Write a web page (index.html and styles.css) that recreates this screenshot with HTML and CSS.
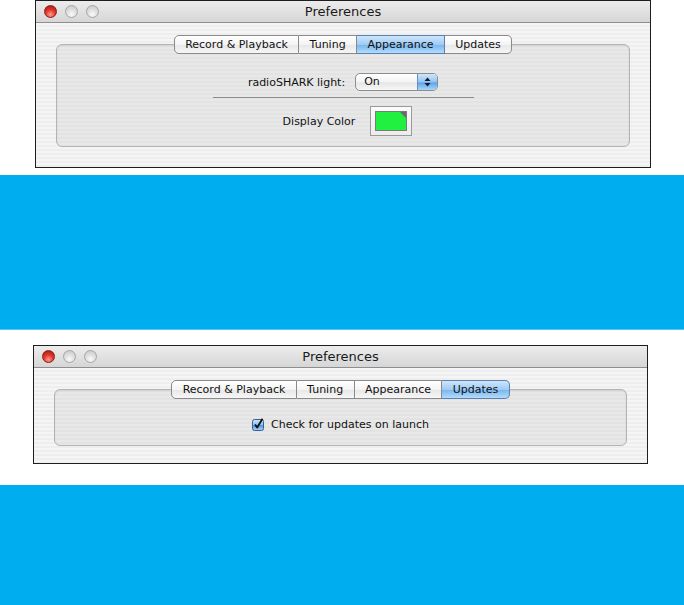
FILE: index.html
```html
<!DOCTYPE html>
<html lang="en">
<head>
    <meta charset="UTF-8">
    <meta name="viewport" content="width=device-width, initial-scale=1.0">
    <title>Preferences</title>
    <link rel="stylesheet" href="styles.css">
</head>
<body>
    <!-- 第一个窗口: Appearance -->
    <div class="window win1">
        <div class="titlebar">
            <div class="lights">
                <span class="light red"></span>
                <span class="light"></span>
                <span class="light"></span>
            </div>
            <div class="title">Preferences</div>
            <div></div>
        </div>
        <div class="body">
            <div class="tabs">
                <span class="tab">Record &amp; Playback</span>
                <span class="tab">Tuning</span>
                <span class="tab on">Appearance</span>
                <span class="tab">Updates</span>
            </div>
            <div class="panel panel1">
                <div class="row row-light">
                    <span class="label">radioSHARK light:</span>
                    <div class="popup">
                        <span class="popup-text">On</span>
                        <span class="popup-arrows">
                            <svg width="7" height="10" viewBox="0 0 7 10">
                                <path d="M3.5 0.5 L6.5 4 L0.5 4 Z" fill="#1a1a2a"/>
                                <path d="M3.5 9.5 L6.5 6 L0.5 6 Z" fill="#1a1a2a"/>
                            </svg>
                        </span>
                    </div>
                </div>
                <div class="sep"></div>
                <div class="row row-color">
                    <span class="label">Display Color</span>
                    <div class="well"><div class="swatch"></div></div>
                </div>
            </div>
        </div>
    </div>

    <div class="band band1"></div>

    <!-- 第二个窗口: Updates -->
    <div class="window win2">
        <div class="titlebar">
            <div class="lights">
                <span class="light red"></span>
                <span class="light"></span>
                <span class="light"></span>
            </div>
            <div class="title">Preferences</div>
            <div></div>
        </div>
        <div class="body">
            <div class="tabs">
                <span class="tab">Record &amp; Playback</span>
                <span class="tab">Tuning</span>
                <span class="tab">Appearance</span>
                <span class="tab on">Updates</span>
            </div>
            <div class="panel panel2">
                <label class="check">
                    <svg class="box" width="13" height="13" viewBox="0 0 13 13">
                        <defs>
                            <linearGradient id="cb" x1="0" y1="0" x2="0" y2="1">
                                <stop offset="0" stop-color="#cfe6fb"/>
                                <stop offset="0.5" stop-color="#8cc0ef"/>
                                <stop offset="0.55" stop-color="#4f9ae6"/>
                                <stop offset="1" stop-color="#a9d6fa"/>
                            </linearGradient>
                        </defs>
                        <rect x="0.5" y="1.5" width="11" height="11" rx="2" fill="url(#cb)" stroke="#3d5f8c"/>
                        <path d="M3 6.5 L5.2 9.5 L10.5 0.8" fill="none" stroke="#111" stroke-width="1.8" stroke-linejoin="round"/>
                    </svg>
                    <span>Check for updates on launch</span>
                </label>
            </div>
        </div>
    </div>

    <div class="band band2"></div>
</body>
</html>
```

FILE: styles.css
```css
body {
    margin: 0;
    background: #fff;
    font-family: "DejaVu Sans", "Liberation Sans", sans-serif;
    font-size: 11px;
    color: #111;
}

.window {
    box-sizing: border-box;
    border: 1px solid #1e1e1e;
    background: repeating-linear-gradient(#eeeeee 0 2px, #f5f5f5 2px 4px);
}

.win1 {
    margin-left: 35px;
    width: 616px;
    height: 168px;
}

.win2 {
    margin: 15px 0 0 33px;
    width: 615px;
    height: 119px;
}

.titlebar {
    display: grid;
    grid-template-columns: 1fr auto 1fr;
    align-items: center;
    height: 21px;
    border-bottom: 1px solid #8e8e8e;
    background: linear-gradient(#ececec, #d6d6d6);
}

.lights {
    display: flex;
    gap: 8px;
    padding-left: 8px;
}

.light {
    width: 13px;
    height: 13px;
    border-radius: 50%;
    box-sizing: border-box;
    border: 1px solid #a6a6a6;
    background: radial-gradient(circle at 50% 75%, #fafafa 0, #e0e0e0 45%, #c4c4c4 100%);
}

.light.red {
    border-color: #8e1c1c;
    background: radial-gradient(circle at 50% 78%, #ff9c8c 0, #e23a30 45%, #a4100c 100%);
}

.title {
    font-size: 13px;
    color: #1a1a1a;
}

.body {
    padding: 12px 20px 19px;
}

.tabs {
    position: relative;
    z-index: 1;
    display: flex;
    justify-content: center;
    margin-bottom: -10px;
}

.tab {
    height: 17px;
    padding: 0 10.4px;
    line-height: 17px;
    border: 1px solid #8a8a8a;
    border-left: none;
    background: linear-gradient(#ffffff, #f4f4f4 50%, #e8e8e8 55%, #f6f6f6);
    color: #111;
}

.tab:first-child {
    border-left: 1px solid #8a8a8a;
    border-radius: 5px 0 0 5px;
}

.tab:last-child {
    border-radius: 0 5px 5px 0;
}

.tab.on {
    border-color: #5b7fb0;
    background: linear-gradient(#cfe6fb, #9fcbf4 50%, #7ab7ef 55%, #b4dcfb);
}

.panel {
    border: 1px solid #b3b3b3;
    border-radius: 6px;
    background: repeating-linear-gradient(#e3e3e3 0 2px, #e8e8e8 2px 4px);
    box-shadow: inset 0 1px 2px rgba(0, 0, 0, 0.08);
}

.panel1 {
    padding: 28px 0 10px;
}

.panel2 {
    padding: 28px 0 11px;
    text-align: center;
}

.row {
    display: flex;
    justify-content: center;
    align-items: center;
}

.row-light {
    gap: 10px;
    height: 18px;
}

.row-color {
    gap: 15px;
    margin-top: 8px;
    padding-left: 9px;
}

.popup {
    display: flex;
    box-sizing: border-box;
    width: 83px;
    height: 18px;
    border: 1px solid #8d8d8d;
    border-radius: 5px;
    overflow: hidden;
    background: linear-gradient(#ffffff, #f3f3f3 50%, #e6e6e6 55%, #f7f7f7);
}

.popup-text {
    flex: 1;
    padding-left: 8px;
    line-height: 16px;
}

.popup-arrows {
    display: flex;
    align-items: center;
    justify-content: center;
    width: 19px;
    border-left: 1px solid #6a8dbd;
    background: linear-gradient(#cfe6fb, #93c4f3 50%, #5ea3e8 55%, #a8d6fb);
}

.sep {
    width: 261px;
    height: 1px;
    margin: 6px auto 0;
    background: #8c8c8c;
}

.well {
    box-sizing: border-box;
    width: 42px;
    height: 30px;
    padding: 4px;
    border: 1px solid #9a9a9a;
    background: linear-gradient(#fbfbfb, #ececec);
}

.swatch {
    position: relative;
    height: 100%;
    box-sizing: border-box;
    border: 1px solid #7a7a7a;
    background: #22f040;
}

.swatch::after {
    content: "";
    position: absolute;
    top: 0;
    right: 0;
    border-top: 6px solid #6a6a6a;
    border-left: 6px solid transparent;
}

.check {
    display: inline-flex;
    align-items: center;
    gap: 6px;
    height: 13px;
}

.band {
    background: #00adef;
}

.band1 {
    margin-top: 7px;
    height: 154px;
    border-bottom: 1px solid #4fc7f6;
}

.band2 {
    margin-top: 21px;
    height: 120px;
}
```
